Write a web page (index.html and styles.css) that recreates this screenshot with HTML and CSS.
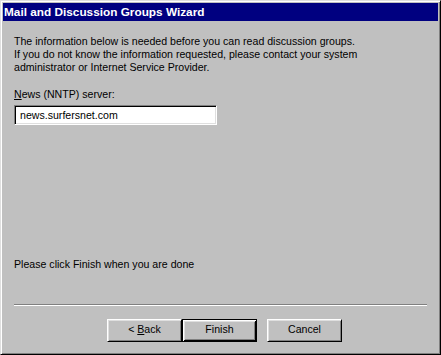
FILE: index.html
```html
<!DOCTYPE html>
<html lang="en">
<head>
    <meta charset="UTF-8">
    <title>Mail and Discussion Groups Wizard</title>
    <link rel="stylesheet" href="styles.css">
</head>
<body>
<div class="window">
    <div class="titlebar">Mail and Discussion Groups Wizard</div>
    <div class="content">
        <p class="intro">The information below is needed before you can read discussion groups.<br>
            If you do not know the information requested, please contact your system<br>
            administrator or Internet Service Provider.</p>
        <label class="label" for="server"><u>N</u>ews (NNTP) server:</label>
        <div class="field" id="server">news.surfersnet.com</div>
        <p class="hint">Please click Finish when you are done</p>
    </div>
    <div class="separator"></div>
    <div class="buttons">
        <div class="btn">&lt; <u>B</u>ack</div>
        <div class="btn default">Finish</div>
        <div class="btn cancel">Cancel</div>
    </div>
</div>
</body>
</html>
```
FILE: styles.css
```css
* {
    margin: 0;
    padding: 0;
    box-sizing: border-box;
}

body {
    width: 441px;
    height: 355px;
    background: #c0c0c0;
    font-family: "Liberation Sans", Arial, sans-serif;
    font-size: 10.6px;
    color: #000;
}

.window {
    width: 441px;
    height: 355px;
    padding: 1px;
    background: #c0c0c0;
    border-top: 1px solid #dfdfdf;
    border-left: 1px solid #dfdfdf;
    border-right: 1px solid #000;
    border-bottom: 1px solid #000;
    box-shadow: inset 1px 1px 0 #fff, inset -1px -1px 0 #808080;
    display: flex;
    flex-direction: column;
}

.titlebar {
    height: 18px;
    margin: 1px 1px 0 1px;
    padding-left: 1px;
    background: #000080;
    color: #fff;
    font-weight: bold;
    font-size: 11.8px;
    line-height: 18px;
}

.content {
    padding: 14px 12px 0 12px;
    height: 283px;
}

.intro {
    line-height: 13px;
}

.label {
    display: block;
    margin-top: 14px;
    line-height: 13px;
}

.field {
    width: 203px;
    height: 20px;
    margin-top: 4px;
    padding: 3px 0 0 5px;
    background: #fff;
    border-top: 1px solid #808080;
    border-left: 1px solid #808080;
    border-right: 1px solid #fff;
    border-bottom: 1px solid #fff;
    box-shadow: inset 1px 1px 0 #000, inset -1px -1px 0 #dfdfdf;
    line-height: 13px;
}

.hint {
    margin-top: 133px;
    line-height: 13px;
}

.separator {
    margin: 0 12px;
    height: 2px;
    border-top: 1px solid #808080;
    border-bottom: 1px solid #fff;
}

.buttons {
    display: flex;
    padding-left: 105px;
    margin-top: 13px;
}

.btn {
    width: 75px;
    height: 23px;
    text-align: center;
    line-height: 19px;
    background: #c0c0c0;
    border-top: 1px solid #fff;
    border-left: 1px solid #fff;
    border-right: 1px solid #000;
    border-bottom: 1px solid #000;
    box-shadow: inset 1px 1px 0 #dfdfdf, inset -1px -1px 0 #808080;
}

.btn.default {
    border: 1px solid #000;
    box-shadow: inset 1px 1px 0 #fff, inset -1px -1px 0 #000, inset 2px 2px 0 #dfdfdf, inset -2px -2px 0 #808080;
}

.btn.cancel {
    margin-left: 10px;
}
```
